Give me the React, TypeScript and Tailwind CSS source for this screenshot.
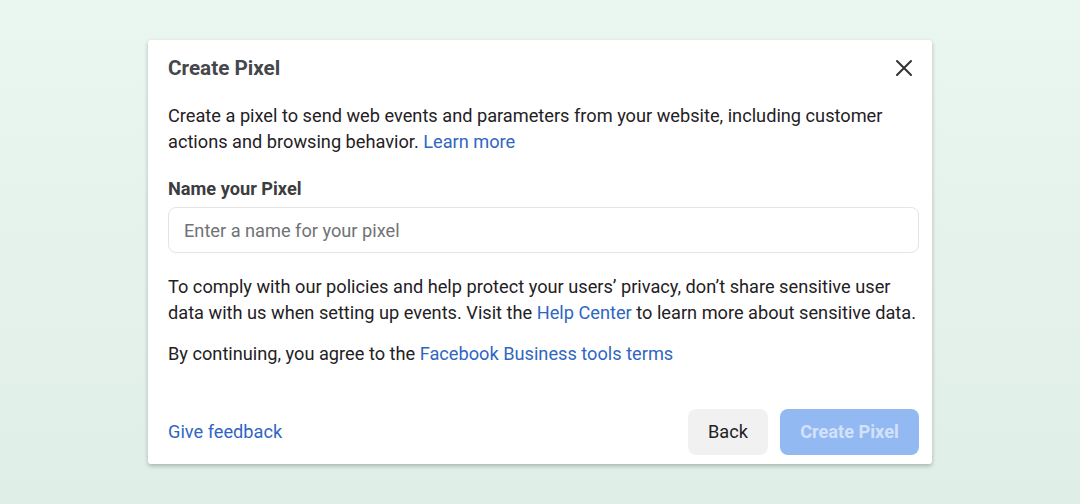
import React from 'react';

const link = 'text-[#2f66c2]';

export default function App() {
  return (
    <div
      className="flex h-[504px] w-full items-center justify-center bg-gradient-to-b from-[#eaf7f0] to-[#e0eee8]"
      style={{ fontFamily: 'Roboto, "Liberation Sans", Arial, sans-serif' }}
    >
      <div className="flex h-[424px] w-[784px] flex-col rounded-[3px] bg-white pt-4 pr-[13px] pb-[9px] pl-5 shadow-[0_2px_4px_rgba(0,0,0,0.25)]">
        {/* Header */}
        <div className="flex items-center justify-between">
          <h1 className="text-[20.7px] leading-6 font-bold text-[#45474b]">Create Pixel</h1>
          <button className="mr-[3px] flex h-6 w-6 items-center justify-center text-[#303235]">
            <svg width="18" height="18" viewBox="0 0 18 18" fill="none" stroke="currentColor" strokeWidth="2" strokeLinecap="round">
              <path d="M2 2L16 16M16 2L2 16" />
            </svg>
          </button>
        </div>

        <p className="mt-[23px] text-[18.2px] leading-[26px] text-[#1f2124]">
          Create a pixel to send web events and parameters from your website, including customer
          <br />
          actions and browsing behavior. <span className={link}>Learn more</span>
        </p>

        <label className="mt-[21px] text-[18.2px] leading-[26px] font-bold text-[#3b3d40]">Name your Pixel</label>
        <input
          className="mt-[5px] h-[46px] w-full rounded-[8px] border border-[#e3e4e6] px-[15px] text-[18.2px] text-[#1f2124] outline-none placeholder:text-[#707275]"
          placeholder="Enter a name for your pixel"
        />

        <p className="mt-[21px] text-[18.2px] leading-[26px] text-[#1f2124]">
          To comply with our policies and help protect your users’ privacy, don’t share sensitive user
          <br />
          data with us when setting up events. Visit the <span className={link}>Help Center</span> to learn
          more about sensitive data.
        </p>
        <p className="mt-[15px] text-[18.2px] leading-[26px] text-[#1f2124]">
          By continuing, you agree to the <span className={link}>Facebook Business tools terms</span>
        </p>

        {/* Footer */}
        <div className="mt-auto flex items-center justify-between">
          <span className={`text-[18.2px] ${link}`}>Give feedback</span>
          <div className="flex gap-3">
            <button className="h-[46px] w-[80px] rounded-[8px] bg-[#f1f1f2] text-[18.2px] text-[#1f2124]">Back</button>
            <button className="h-[46px] w-[139px] rounded-[8px] bg-[#93b9f3] text-[18.2px] font-bold text-white/60">
              Create Pixel
            </button>
          </div>
        </div>
      </div>
    </div>
  );
}
